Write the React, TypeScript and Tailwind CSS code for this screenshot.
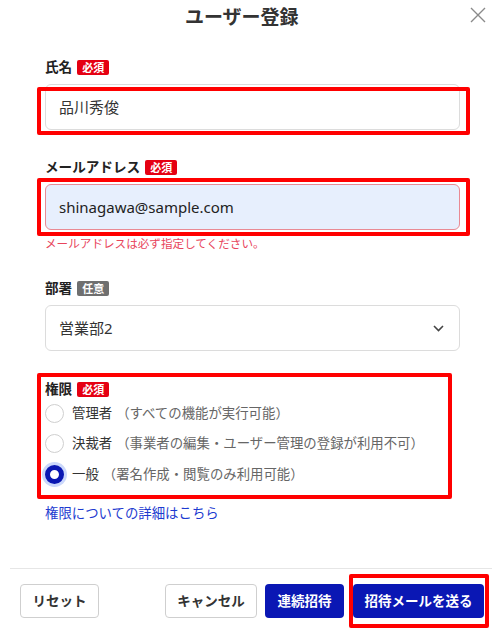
import React from "react";

function Badge({ text, gray }: { text: string; gray?: boolean }) {
  return (
    <span
      className={
        "inline-flex h-[15px] items-center rounded-[2px] px-[5px] text-[11px] font-bold leading-none text-white " +
        (gray ? "bg-[#6f6f6f]" : "bg-[#e50012]")
      }
    >
      {text}
    </span>
  );
}

function Label({ text, badge, gray }: { text: string; badge: string; gray?: boolean }) {
  return (
    <div className="flex h-[20px] items-center gap-[5px]">
      <span className="text-[13.6px] font-bold leading-none text-[#222]">{text}</span>
      <Badge text={badge} gray={gray} />
    </div>
  );
}

function Radio({ checked, main, sub }: { checked?: boolean; main: string; sub: string }) {
  return (
    <div className="flex h-[30.5px] items-center">
      {checked ? (
        <span className="flex h-[19px] w-[19px] items-center justify-center rounded-full border-[5px] border-[#0a17b2] bg-white ring-[3px] ring-[#cbd8fb]" />
      ) : (
        <span className="h-[19px] w-[19px] rounded-full border border-[#cfcfcf] bg-white" />
      )}
      <span className="ml-[8px] text-[13.4px] leading-none text-[#333]">{main}</span>
      <span className="ml-[4px] text-[13.4px] leading-none text-[#666]">（{sub}）</span>
    </div>
  );
}

export default function App() {
  return (
    <div
      className="flex h-[640px] w-[500px] flex-col overflow-hidden bg-white"
      style={{ fontFamily: '"Noto Sans", "Noto Sans CJK JP", sans-serif' }}
    >
      {/* header */}
      <div className="flex h-[34px] items-center pr-[14px]">
        <div className="w-[185px]" />
        <div className="text-[19px] font-bold leading-none text-[#333]">ユーザー登録</div>
        <div className="flex-1" />
        <svg width="16" height="16" viewBox="0 0 16 16" className="mt-[-4px]">
          <path d="M1 1 L15 15 M15 1 L1 15" stroke="#8a8a8a" strokeWidth="1.4" fill="none" />
        </svg>
      </div>

      {/* body */}
      <div className="flex flex-col pl-[45px] pr-[40px]">
        <div className="mt-[23px]">
          <Label text="氏名" badge="必須" />
        </div>
        <div className="relative mt-[7px]">
          <div className="flex h-[46px] items-center rounded-[6px] border border-[#dcdcdc] bg-white px-[13px] text-[15px] text-[#333]">
            品川秀俊
          </div>
          <div className="pointer-events-none absolute bottom-[-5px] left-[-8px] right-[-10px] top-[3px] rounded-[2px] border-4 border-[#ff0000]" />
        </div>

        <div className="mt-[27px]">
          <Label text="メールアドレス" badge="必須" />
        </div>
        <div className="relative mt-[7px]">
          <div className="flex h-[46px] items-center rounded-[6px] border border-[#e98a94] bg-[#e7effd] px-[13px] text-[15px] text-[#222]">
            shinagawa@sample.com
          </div>
          <div className="pointer-events-none absolute bottom-[-6px] left-[-8px] right-[-10px] top-[-6px] rounded-[2px] border-4 border-[#ff0000]" />
        </div>
        <div className="mt-[6px] h-[16px] text-[11.6px] leading-[16px] text-[#e8455c]">
          メールアドレスは必ず指定してください。
        </div>

        <div className="mt-[26px]">
          <Label text="部署" badge="任意" gray />
        </div>
        <div className="mt-[7px] flex h-[46px] items-center justify-between rounded-[6px] border border-[#dcdcdc] bg-white pl-[13px] pr-[15px]">
          <span className="text-[15px] text-[#333]">営業部2</span>
          <svg width="11" height="7" viewBox="0 0 11 7">
            <path d="M1 1 L5.5 5.5 L10 1" stroke="#444" strokeWidth="1.6" fill="none" />
          </svg>
        </div>

        <div className="relative mt-[28px]">
          <Label text="権限" badge="必須" />
          <div className="mt-[-1px] flex flex-col">
            <Radio main="管理者" sub="すべての機能が実行可能" />
            <Radio main="決裁者" sub="事業者の編集・ユーザー管理の登録が利用不可" />
            <Radio checked main="一般" sub="署名作成・閲覧のみ利用可能" />
          </div>
          <div className="pointer-events-none absolute bottom-[-9px] left-[-8px] right-[8px] top-[-6px] rounded-[2px] border-4 border-[#ff0000]" />
        </div>

        <div className="mt-[14px] text-[13.4px] leading-[18px] text-[#1d3bd0]">権限についての詳細はこちら</div>
      </div>

      <div className="flex-1" />

      {/* footer */}
      <div className="ml-[10px] mr-[8px] flex items-center border-t border-[#e6e6e6] pb-[22px] pl-[10px] pr-[8px] pt-[15px]">
        <button className="h-[34px] w-[79px] rounded-[4px] border border-[#cfcfcf] bg-white text-[13.5px] font-bold text-[#333]">
          リセット
        </button>
        <div className="flex-1" />
        <button className="h-[34px] w-[92px] rounded-[4px] border border-[#cfcfcf] bg-white text-[13.5px] font-bold text-[#333]">
          キャンセル
        </button>
        <button className="ml-[8px] h-[34px] w-[79px] rounded-[4px] bg-[#0a17b4] text-[13.5px] font-bold text-white">
          連続招待
        </button>
        <div className="relative ml-[9px]">
          <button className="h-[34px] w-[131px] rounded-[4px] bg-[#0a17b4] text-[13.5px] font-bold text-white">
            招待メールを送る
          </button>
          <div className="pointer-events-none absolute bottom-[-10px] left-[-4px] right-[-5px] top-[-10px] rounded-[2px] border-4 border-[#ff0000]" />
        </div>
      </div>
    </div>
  );
}
